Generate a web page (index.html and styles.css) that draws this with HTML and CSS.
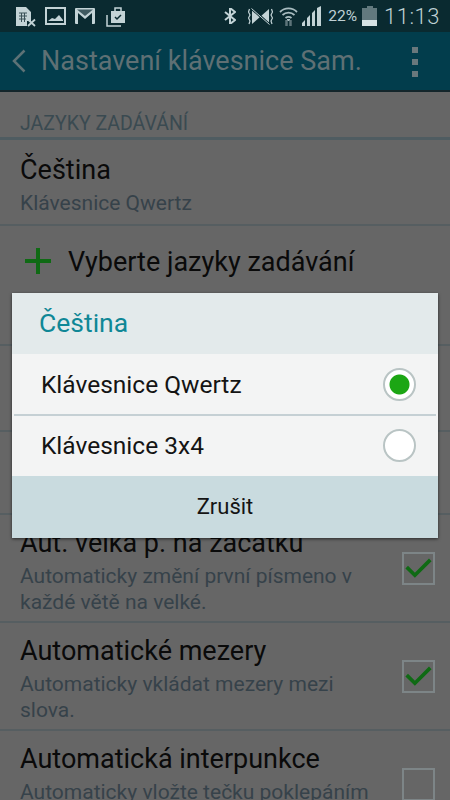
FILE: index.html
```html
<!DOCTYPE html>
<html lang="cs">
<head>
    <meta charset="UTF-8">
    <meta name="viewport" content="width=device-width, initial-scale=1.0">
    <title>Nastavení klávesnice Samsung</title>
    <link rel="stylesheet" href="styles.css">
</head>
<body>

<div class="screen">
    <!-- stavovy radek -->
    <div class="status-bar">
        <div class="status-left">
            <svg class="ic-sim" viewBox="0 0 21 21" width="21" height="21">
                <path d="M1 1h10l5 5v9h-4v5H1z" fill="#c3d3d6"/>
                <path d="M4 7h8M4 10h8M4 13h7M6.500 7v9M9.500 7v9" stroke="#3a5258" stroke-width="1" fill="none"/>
                <path d="M13 13.500l7 6.500M20 13.500l-7 6.500" stroke="#c3d3d6" stroke-width="1.800" fill="none"/>
            </svg>
            <svg class="ic-image" viewBox="0 0 21 18" width="21" height="18">
                <rect x="1" y="1" width="19" height="16" fill="none" stroke="#c3d3d6" stroke-width="2"/>
                <path d="M3 14l4-3 3 1 4-4 4 5v1z" fill="#c3d3d6"/>
            </svg>
            <svg class="ic-mail" viewBox="0 0 20 16" width="20" height="16">
                <rect x="0" y="0" width="20" height="16" rx="1" fill="#c3d3d6"/>
                <path d="M3 16V5l7 6 7-6v11z" fill="#0a2a30"/>
                <path d="M2 1.500h16L10 8z" fill="#3f5a60"/>
            </svg>
            <svg class="ic-tasks" viewBox="0 0 20 21" width="20" height="21">
                <path d="M5 5h14v12H5z" fill="#c3d3d6"/>
                <path d="M9 5V2h6v3" fill="none" stroke="#c3d3d6" stroke-width="1.500"/>
                <path d="M1 9v11h14" fill="none" stroke="#c3d3d6" stroke-width="1.500"/>
                <path d="M9 11l2 2 4-4" fill="none" stroke="#0a2a30" stroke-width="1.500"/>
            </svg>
        </div>
        <div class="status-right">
            <svg class="ic-bt" viewBox="0 0 12 16" width="12" height="16">
                <path d="M1 4l10 8-5 4V0l5 4-10 8" fill="none" stroke="#c3d3d6" stroke-width="2"/>
            </svg>
            <svg class="ic-mute" viewBox="0 0 25 17" width="25" height="17">
                <path d="M4 1l8.500 7.500L4 16zM21 1v15l-8.500-7.500z" fill="#c3d3d6"/>
                <path d="M3 0l19 17" stroke="#0a2a30" stroke-width="2.500"/>
                <path d="M3.500 0.500l18 16" stroke="#c3d3d6" stroke-width="1"/>
                <path d="M1.500 1l-1 3 1.500 3-1.500 3 1.500 3-1 3M23.500 1l1 3-1.500 3 1.500 3-1.500 3 1 3" fill="none" stroke="#c3d3d6" stroke-width="1.200"/>
            </svg>
            <svg class="ic-wifi" viewBox="0 0 19 20" width="19" height="20">
                <path d="M1 6a12 12 0 0 1 17 0M3.500 9a9 9 0 0 1 12 0M6.500 12a5 5 0 0 1 6 0" fill="none" stroke="#a9bcc0" stroke-width="1.800"/>
                <path d="M9.500 13v2" stroke="#a9bcc0" stroke-width="3"/>
                <path d="M7.500 14v6M11.500 14v6" stroke="#5d7479" stroke-width="2.500"/>
            </svg>
            <svg class="ic-signal" viewBox="0 0 19 20" width="19" height="20">
                <path d="M0 20v-3l3-3v6zM5 20v-8l3-3v11zM10 20V7l3-3v16zM15 20V2l4-2v20z" fill="#c3d3d6"/>
            </svg>
            <span class="battery-pct">22%</span>
            <div class="battery">
                <div class="battery-nub"></div>
                <div class="battery-body"><div class="battery-level"></div></div>
            </div>
            <span class="clock">11:13</span>
        </div>
    </div>

    <!-- horni lista -->
    <div class="app-bar">
        <svg class="back-icon" viewBox="0 0 14 24" width="14" height="24">
            <path d="M12.500 1.500L2 12l10.500 10.500" fill="none" stroke="#5d7276" stroke-width="2.500"/>
        </svg>
        <div class="app-title">Nastavení klávesnice Sam.</div>
        <div class="kebab"><span></span><span></span><span></span></div>
    </div>

    <!-- seznam nastaveni -->
    <div class="section-head">JAZYKY ZADÁVÁNÍ</div>

    <div class="row row-lang">
        <div class="row-text">
            <div class="row-title">Čeština</div>
            <div class="row-sub">Klávesnice Qwertz</div>
        </div>
    </div>

    <div class="row row-add">
        <svg class="plus" viewBox="0 0 26 26" width="26" height="26">
            <path d="M13 0v26M0 13h26" stroke="#0f6a14" stroke-width="4"/>
        </svg>
        <div class="row-title">Vyberte jazyky zadávání</div>
    </div>

    <div class="row row-blank1"></div>
    <div class="row row-blank2"></div>

    <div class="row row-option">
        <div class="row-text">
            <div class="row-title">Aut. velká p. na začátku</div>
            <div class="row-sub">Automaticky změní první písmeno v každé větě na velké.</div>
        </div>
        <div class="check">
            <svg viewBox="0 0 32 24" width="30" height="22"><path d="M3 11l9 9L29 3" fill="none" stroke="#0f6a14" stroke-width="4"/></svg>
        </div>
    </div>

    <div class="row row-option">
        <div class="row-text">
            <div class="row-title">Automatické mezery</div>
            <div class="row-sub">Automaticky vkládat mezery mezi slova.</div>
        </div>
        <div class="check">
            <svg viewBox="0 0 32 24" width="30" height="22"><path d="M3 11l9 9L29 3" fill="none" stroke="#0f6a14" stroke-width="4"/></svg>
        </div>
    </div>

    <div class="row row-option">
        <div class="row-text">
            <div class="row-title">Automatická interpunkce</div>
            <div class="row-sub">Automaticky vložte tečku poklepáním</div>
        </div>
        <div class="check"></div>
    </div>

    <!-- dialog -->
    <div class="dialog">
        <div class="dialog-title">Čeština</div>
        <div class="dialog-options">
            <div class="dialog-option">
                <span>Klávesnice Qwertz</span>
                <div class="radio radio-on"></div>
            </div>
            <div class="dialog-divider"></div>
            <div class="dialog-option">
                <span>Klávesnice 3x4</span>
                <div class="radio"></div>
            </div>
        </div>
        <div class="dialog-cancel">Zrušit</div>
    </div>
</div>

</body>
</html>
```

FILE: styles.css
```css
html, body {
    margin: 0;
    padding: 0;
}
body {
    font-family: Roboto, "Liberation Sans", sans-serif;
    background: #666666;
}
.screen {
    position: relative;
    width: 450px;
    height: 800px;
    overflow: hidden;
    background: #666666;
}

/* stavovy radek */
.status-bar {
    display: flex;
    justify-content: space-between;
    align-items: center;
    height: 32px;
    padding: 0 10px 0 15px;
    background: #0a2a30;
    color: #bfd0d4;
}
.status-left, .status-right {
    display: flex;
    align-items: center;
}
.ic-image { margin-left: 9px; }
.ic-mail { margin-left: 9px; }
.ic-tasks { margin-left: 11px; }
.ic-mute { margin-left: 12px; }
.ic-wifi { margin-left: 6px; }
.ic-signal { margin-left: 4px; }
.battery-pct {
    margin-left: 7px;
    font-size: 15.500px;
}
.battery {
    display: flex;
    flex-direction: column;
    align-items: center;
    width: 15px;
    margin-left: 5px;
}
.battery-nub {
    width: 6px;
    height: 2px;
    background: #62797e;
}
.battery-body {
    display: flex;
    align-items: flex-end;
    width: 100%;
    height: 18px;
    background: #62797e;
}
.battery-level {
    width: 100%;
    height: 6px;
    background: #d6e2e4;
}
.clock {
    margin-left: 7px;
    font-size: 22px;
    font-weight: 300;
    letter-spacing: 0.5px;
}

/* horni lista */
.app-bar {
    display: flex;
    align-items: center;
    height: 58px;
    padding-left: 12px;
    background: #023d4c;
    border-bottom: 2px solid #14262b;
}
.app-title {
    margin-left: 15px;
    font-size: 27px;
    color: #5f7074;
    white-space: nowrap;
}
.kebab {
    display: flex;
    flex-direction: column;
    gap: 6px;
    margin: 2px 32px 0 auto;
}
.kebab span {
    display: block;
    width: 6px;
    height: 6px;
    background: #69787c;
}

/* seznam */
.section-head {
    height: 48px;
    padding: 22px 20px 0;
    box-sizing: border-box;
    font-size: 19.500px;
    line-height: 20px;
    color: #3a4a51;
    border-bottom: 3px solid #4f5c61;
}
.row {
    display: flex;
    box-sizing: border-box;
    padding: 0 15px 0 20px;
    border-bottom: 2px solid #565e61;
}
.row-text {
    flex: 1;
}
.row-title {
    font-size: 27px;
    line-height: 30px;
    color: #0a0a0a;
    white-space: nowrap;
}
.row-sub {
    margin-top: 5px;
    font-size: 21px;
    line-height: 26px;
    color: #36424a;
}
.row-lang {
    height: 86px;
    padding-top: 15px;
}
.row-add {
    height: 120px;
    padding-top: 22px;
    padding-left: 25px;
}
.row-add .row-title {
    margin-left: 17px;
    line-height: 28px;
}
.row-blank1 { height: 86px; }
.row-blank2 { height: 83px; }
.row-option {
    height: 108px;
    align-items: center;
}
.row-option .row-text {
    align-self: flex-start;
    padding-top: 13px;
    padding-right: 20px;
}
.check {
    display: flex;
    align-items: center;
    justify-content: center;
    flex: none;
    box-sizing: border-box;
    width: 33px;
    height: 33px;
    border: 2px solid #7d8587;
}

/* dialog */
.dialog {
    position: absolute;
    top: 293px;
    left: 12px;
    width: 426px;
    box-shadow: 0 1px 3px rgba(0, 0, 0, 0.6);
}
.dialog-title {
    height: 61px;
    padding-left: 27px;
    font-size: 26.500px;
    line-height: 60px;
    color: #0f8796;
    background: #e3eaeb;
}
.dialog-options {
    background: #f3f4f4;
}
.dialog-option {
    display: flex;
    justify-content: space-between;
    align-items: center;
    height: 61px;
    padding: 0 22px 0 29px;
    font-size: 24.500px;
    color: #141414;
}
.dialog-divider {
    position: relative;
    height: 2px;
    margin: -1px 2px;
    background: #c5d0d4;
}
.radio {
    box-sizing: border-box;
    width: 33px;
    height: 33px;
    border: 2px solid #b9c4c4;
    border-radius: 50%;
    background: #ffffff;
}
.radio-on {
    background: radial-gradient(circle, #1ca614 0, #1ca614 9.500px, #ffffff 10.500px);
}
.dialog-cancel {
    height: 62px;
    font-size: 22px;
    line-height: 62px;
    text-align: center;
    color: #141414;
    background: #c9dbdf;
}
```
